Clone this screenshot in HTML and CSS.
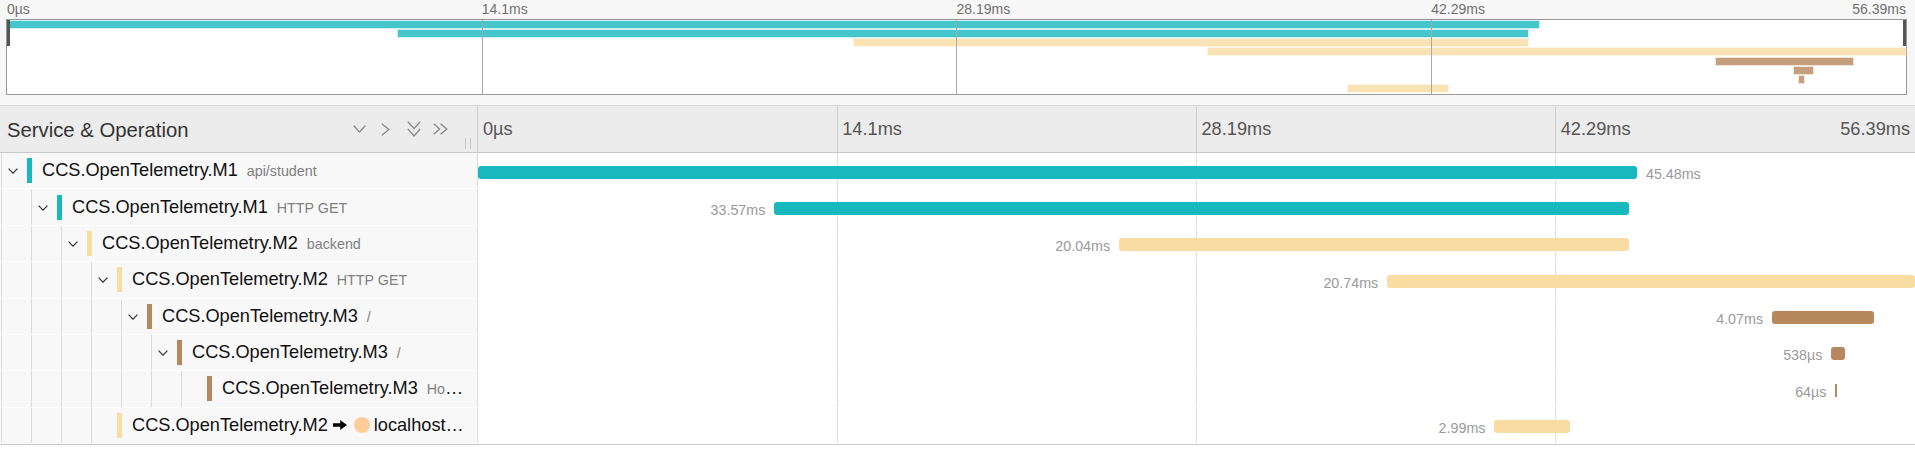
FILE: index.html
```html
<!DOCTYPE html>
<html>
<head>
<meta charset="utf-8">
<title>Trace</title>
<link rel="stylesheet" href="styles.css">
</head>
<body>
<div class="trace-page">
  <section class="minimap">
    <div class="mm-labels">
      <div class="mm-col"><span>0µs</span></div>
      <div class="mm-col"><span>14.1ms</span></div>
      <div class="mm-col"><span>28.19ms</span></div>
      <div class="mm-col mm-last"><span>42.29ms</span><span>56.39ms</span></div>
    </div>
    <div class="mm-box">
      <div class="mm-row"><div class="mm-bar mm-teal" style="margin-left:0%;width:80.65%"></div></div>
      <div class="mm-row"><div class="mm-bar mm-teal" style="margin-left:20.59%;width:59.53%"></div></div>
      <div class="mm-row"><div class="mm-bar mm-tan" style="margin-left:44.58%;width:35.54%"></div></div>
      <div class="mm-row"><div class="mm-bar mm-tan" style="margin-left:63.24%;width:36.76%"></div></div>
      <div class="mm-row"><div class="mm-bar mm-brown" style="margin-left:90.0%;width:7.2%"></div></div>
      <div class="mm-row"><div class="mm-bar mm-brown" style="margin-left:94.1%;width:1.0%"></div></div>
      <div class="mm-row"><div class="mm-bar mm-brown" style="margin-left:94.35%;width:0.3%"></div></div>
      <div class="mm-row"><div class="mm-bar mm-tan" style="margin-left:70.6%;width:5.3%"></div></div>
      <span class="mm-handle mm-handle-left"></span>
      <span class="mm-handle mm-handle-right"></span>
    </div>
  </section>

  <section class="trace">
    <div class="th">
      <div class="th-side">
        <h3 class="th-title">Service &amp; Operation</h3>
        <div class="th-tools">
          <svg class="ic ic-down" width="13" height="8" viewBox="0 0 13 8"><path d="M0.8 0.8 L6.5 7 L12.2 0.8"/></svg>
          <svg class="ic ic-right" width="9" height="13" viewBox="0 0 9 13"><path d="M0.8 0.8 L8 6.5 L0.8 12.2"/></svg>
          <svg class="ic ic-ddown" width="14" height="16" viewBox="0 0 14 16"><path d="M0.8 0.8 L7 7.5 L13.2 0.8 M0.8 8 L7 15 L13.2 8"/></svg>
          <svg class="ic ic-dright" width="15" height="12" viewBox="0 0 15 12"><path d="M0.8 0.8 L6.5 6 L0.8 11.2 M7.5 0.8 L13.8 6 L7.5 11.2"/></svg>
        </div>
        <span class="resizer"></span>
      </div>
      <div class="th-time">
        <div class="tcol"><span>0µs</span></div>
        <div class="tcol"><span>14.1ms</span></div>
        <div class="tcol"><span>28.19ms</span></div>
        <div class="tcol tcol-last"><span>42.29ms</span><span>56.39ms</span></div>
      </div>
    </div>

    <div class="rows">
      <div class="row">
        <div class="side">
          <span class="toggle"><svg class="chev" width="10" height="6" viewBox="0 0 10 6"><path d="M0.6 0.6 L5 5.2 L9.4 0.6"/></svg></span>
          <span class="svc-bar c-teal"></span>
          <div class="name"><span class="svc">CCS.OpenTelemetry.M1</span><span class="op">api/student</span></div>
        </div>
        <div class="tl"><div class="span-bar c-teal" style="margin-left:0%;width:80.65%"><span class="lbl lbl-right">45.48ms</span></div></div>
      </div>

      <div class="row">
        <div class="side">
          <span class="guide"></span>
          <span class="toggle"><svg class="chev" width="10" height="6" viewBox="0 0 10 6"><path d="M0.6 0.6 L5 5.2 L9.4 0.6"/></svg></span>
          <span class="svc-bar c-teal"></span>
          <div class="name"><span class="svc">CCS.OpenTelemetry.M1</span><span class="op">HTTP GET</span></div>
        </div>
        <div class="tl"><div class="span-bar c-teal" style="margin-left:20.59%;width:59.53%"><span class="lbl lbl-left">33.57ms</span></div></div>
      </div>

      <div class="row">
        <div class="side">
          <span class="guide"></span><span class="guide"></span>
          <span class="toggle"><svg class="chev" width="10" height="6" viewBox="0 0 10 6"><path d="M0.6 0.6 L5 5.2 L9.4 0.6"/></svg></span>
          <span class="svc-bar c-tan"></span>
          <div class="name"><span class="svc">CCS.OpenTelemetry.M2</span><span class="op">backend</span></div>
        </div>
        <div class="tl"><div class="span-bar c-tan" style="margin-left:44.58%;width:35.54%"><span class="lbl lbl-left">20.04ms</span></div></div>
      </div>

      <div class="row">
        <div class="side">
          <span class="guide"></span><span class="guide"></span><span class="guide"></span>
          <span class="toggle"><svg class="chev" width="10" height="6" viewBox="0 0 10 6"><path d="M0.6 0.6 L5 5.2 L9.4 0.6"/></svg></span>
          <span class="svc-bar c-tan"></span>
          <div class="name"><span class="svc">CCS.OpenTelemetry.M2</span><span class="op">HTTP GET</span></div>
        </div>
        <div class="tl"><div class="span-bar c-tan" style="margin-left:63.24%;width:36.76%"><span class="lbl lbl-left">20.74ms</span></div></div>
      </div>

      <div class="row">
        <div class="side">
          <span class="guide"></span><span class="guide"></span><span class="guide"></span><span class="guide"></span>
          <span class="toggle"><svg class="chev" width="10" height="6" viewBox="0 0 10 6"><path d="M0.6 0.6 L5 5.2 L9.4 0.6"/></svg></span>
          <span class="svc-bar c-brown"></span>
          <div class="name"><span class="svc">CCS.OpenTelemetry.M3</span><span class="op">/</span></div>
        </div>
        <div class="tl"><div class="span-bar c-brown" style="margin-left:90.02%;width:7.13%"><span class="lbl lbl-left">4.07ms</span></div></div>
      </div>

      <div class="row">
        <div class="side">
          <span class="guide"></span><span class="guide"></span><span class="guide"></span><span class="guide"></span><span class="guide"></span>
          <span class="toggle"><svg class="chev" width="10" height="6" viewBox="0 0 10 6"><path d="M0.6 0.6 L5 5.2 L9.4 0.6"/></svg></span>
          <span class="svc-bar c-brown"></span>
          <div class="name"><span class="svc">CCS.OpenTelemetry.M3</span><span class="op">/</span></div>
        </div>
        <div class="tl"><div class="span-bar c-brown" style="margin-left:94.15%;width:0.97%"><span class="lbl lbl-left">538µs</span></div></div>
      </div>

      <div class="row">
        <div class="side">
          <span class="guide"></span><span class="guide"></span><span class="guide"></span><span class="guide"></span><span class="guide"></span><span class="guide"></span>
          <span class="toggle"></span>
          <span class="svc-bar c-brown"></span>
          <div class="name"><span class="svc">CCS.OpenTelemetry.M3</span><span class="op">HostingApplication</span></div>
        </div>
        <div class="tl"><div class="span-bar span-thin c-brown" style="margin-left:94.43%;width:0.14%"><span class="lbl lbl-left">64µs</span></div></div>
      </div>

      <div class="row">
        <div class="side">
          <span class="guide"></span><span class="guide"></span><span class="guide"></span>
          <span class="toggle"></span>
          <span class="svc-bar c-tan"></span>
          <div class="name"><span class="svc">CCS.OpenTelemetry.M2</span><svg class="arrow" width="14" height="10" viewBox="0 0 14 10"><path d="M0 3.2 H7.2 V0 L14 5 L7.2 10 V6.8 H0 Z"/></svg><span class="peer-dot"></span><span class="peer">localhost:5002</span></div>
        </div>
        <div class="tl"><div class="span-bar c-tan" style="margin-left:70.7%;width:5.29%"><span class="lbl lbl-left">2.99ms</span></div></div>
      </div>
    </div>
  </section>
</div>
</body>
</html>
```

FILE: styles.css
```css
* { box-sizing: border-box; }

html, body {
  margin: 0;
  padding: 0;
  background: #fff;
  font-family: "Liberation Sans", Arial, Helvetica, sans-serif;
}

/* ---------- minimap ---------- */
.minimap {
  background: #f7f7f7;
  padding: 0 8px 10px 6px;
}

.mm-labels {
  display: grid;
  grid-template-columns: repeat(4, 1fr);
  height: 19px;
  line-height: 19px;
  padding: 0 1px;
  font-size: 14px;
  color: #707070;
}

.mm-col { white-space: nowrap; }
.mm-last { display: flex; justify-content: space-between; }

.mm-box {
  position: relative;
  height: 76px;
  border: 1px solid #999;
  background: #fff;
}

.mm-box::after {
  content: "";
  position: absolute;
  inset: 0;
  pointer-events: none;
  background-image:
    linear-gradient(#a8a8a8, #a8a8a8),
    linear-gradient(#a8a8a8, #a8a8a8),
    linear-gradient(#a8a8a8, #a8a8a8);
  background-size: 1px 100%;
  background-repeat: no-repeat;
  background-position: 25% 0, 50% 0, 75% 0;
}

.mm-row {
  height: 9.25px;
  padding-top: 0.7px;
}

.mm-bar { height: 7px; }
.mm-teal  { background: rgba(23, 184, 190, 0.8);  box-shadow: 0 0 0 1px rgba(23, 184, 190, 0.22); }
.mm-tan   { background: rgba(248, 220, 161, 0.8); box-shadow: 0 0 0 1px rgba(248, 220, 161, 0.3); }
.mm-brown { background: rgba(183, 136, 94, 0.8);  box-shadow: 0 0 0 1px rgba(183, 136, 94, 0.22); }

.mm-handle {
  position: absolute;
  top: 0;
  width: 3px;
  height: 26px;
  background: #555;
  z-index: 2;
}
.mm-handle-left { left: 0; }
.mm-handle-right { right: 0; }

/* ---------- header ---------- */
.th {
  display: flex;
  height: 48px;
  border-top: 1px solid #d8d8d8;
  border-bottom: 1px solid #c8c8c8;
  background: #ececec;
}

.th-side {
  position: relative;
  width: 478px;
  flex: none;
  display: flex;
  align-items: center;
  padding-left: 7px;
  border-right: 1px solid #cfcfcf;
}

.th-title {
  margin: 0;
  padding-top: 2px;
  font-size: 20.3px;
  font-weight: normal;
  color: #333;
  white-space: nowrap;
}

.th-tools {
  margin-left: auto;
  padding-right: 29px;
  display: flex;
  align-items: center;
}

.ic { display: block; fill: none; stroke: #8a8a8a; stroke-width: 1.3; }
.ic-right  { margin-left: 15px; }
.ic-ddown  { margin-left: 17px; }
.ic-dright { margin-left: 12px; }

.resizer {
  position: absolute;
  right: 6px;
  bottom: 3px;
  width: 6px;
  height: 11px;
  border-left: 1px solid #c8c8c8;
  border-right: 1px solid #c8c8c8;
}

.th-time {
  flex: 1;
  display: grid;
  grid-template-columns: repeat(4, 1fr);
  align-items: center;
  font-size: 18.2px;
  color: #555;
  background-image:
    linear-gradient(#d0d0d0, #d0d0d0),
    linear-gradient(#d0d0d0, #d0d0d0),
    linear-gradient(#d0d0d0, #d0d0d0);
  background-size: 1px 100%;
  background-repeat: no-repeat;
  background-position: 25% 0, 50% 0, 75% 0;
}

.tcol { padding-left: 5px; white-space: nowrap; }
.tcol-last { display: flex; justify-content: space-between; padding-right: 5px; }

/* ---------- rows ---------- */
.rows { border-bottom: 1px solid #c8c8c8; }

.row {
  display: flex;
  height: 36.375px;
  border-bottom: 1px solid #fff;
}

.side {
  width: 478px;
  flex: none;
  display: flex;
  align-items: center;
  padding: 0 13px 0 2px;
  border-right: 1px solid #dcdcdc;
  background: linear-gradient(#dcdcdc, #dcdcdc) 1px 0 / 1px 100% no-repeat, #f8f8f8;
}

.guide {
  flex: none;
  align-self: stretch;
  width: 30px;
  border-right: 1px solid #dadada;
}

.toggle {
  flex: none;
  width: 25px;
  display: flex;
  align-items: center;
  padding-left: 6px;
  padding-top: 1px;
}

.chev { display: block; fill: none; stroke: #333; stroke-width: 1.2; }

.svc-bar {
  flex: none;
  width: 5px;
  height: 25px;
}

.c-teal  { background: #17b8be; }
.c-tan   { background: #f8dca1; }
.c-brown { background: #b7885e; }

.name {
  flex: 1;
  min-width: 0;
  padding-left: 10px;
  overflow: hidden;
  white-space: nowrap;
  text-overflow: ellipsis;
  font-size: 18.2px;
  color: #111;
}

.op {
  margin-left: 9px;
  font-size: 14.3px;
  color: #808080;
}

.arrow {
  display: inline-block;
  vertical-align: middle;
  margin: -3px 0 0 5px;
  fill: #000;
}

.peer-dot {
  display: inline-block;
  vertical-align: middle;
  width: 16px;
  height: 16px;
  margin: -3px 0 0 7px;
  border-radius: 50%;
  background: #ffcb99;
}

.peer { margin-left: 4px; }

.tl {
  flex: 1;
  background-image:
    linear-gradient(#dedede, #dedede),
    linear-gradient(#dedede, #dedede),
    linear-gradient(#dedede, #dedede);
  background-size: 1px 100%;
  background-repeat: no-repeat;
  background-position: 25% 0, 50% 0, 75% 0;
}

.span-bar {
  position: relative;
  height: 13px;
  margin-top: 12.5px;
  border-radius: 3px;
}

.span-thin { border-radius: 0; min-width: 2px; }

.lbl {
  position: absolute;
  top: calc(50% + 1.5px);
  transform: translateY(-50%);
  font-size: 14.3px;
  line-height: 16px;
  color: #9a9a9a;
  white-space: nowrap;
}

.lbl-right { left: calc(100% + 9px); }
.lbl-left { right: calc(100% + 8.5px); }
```
